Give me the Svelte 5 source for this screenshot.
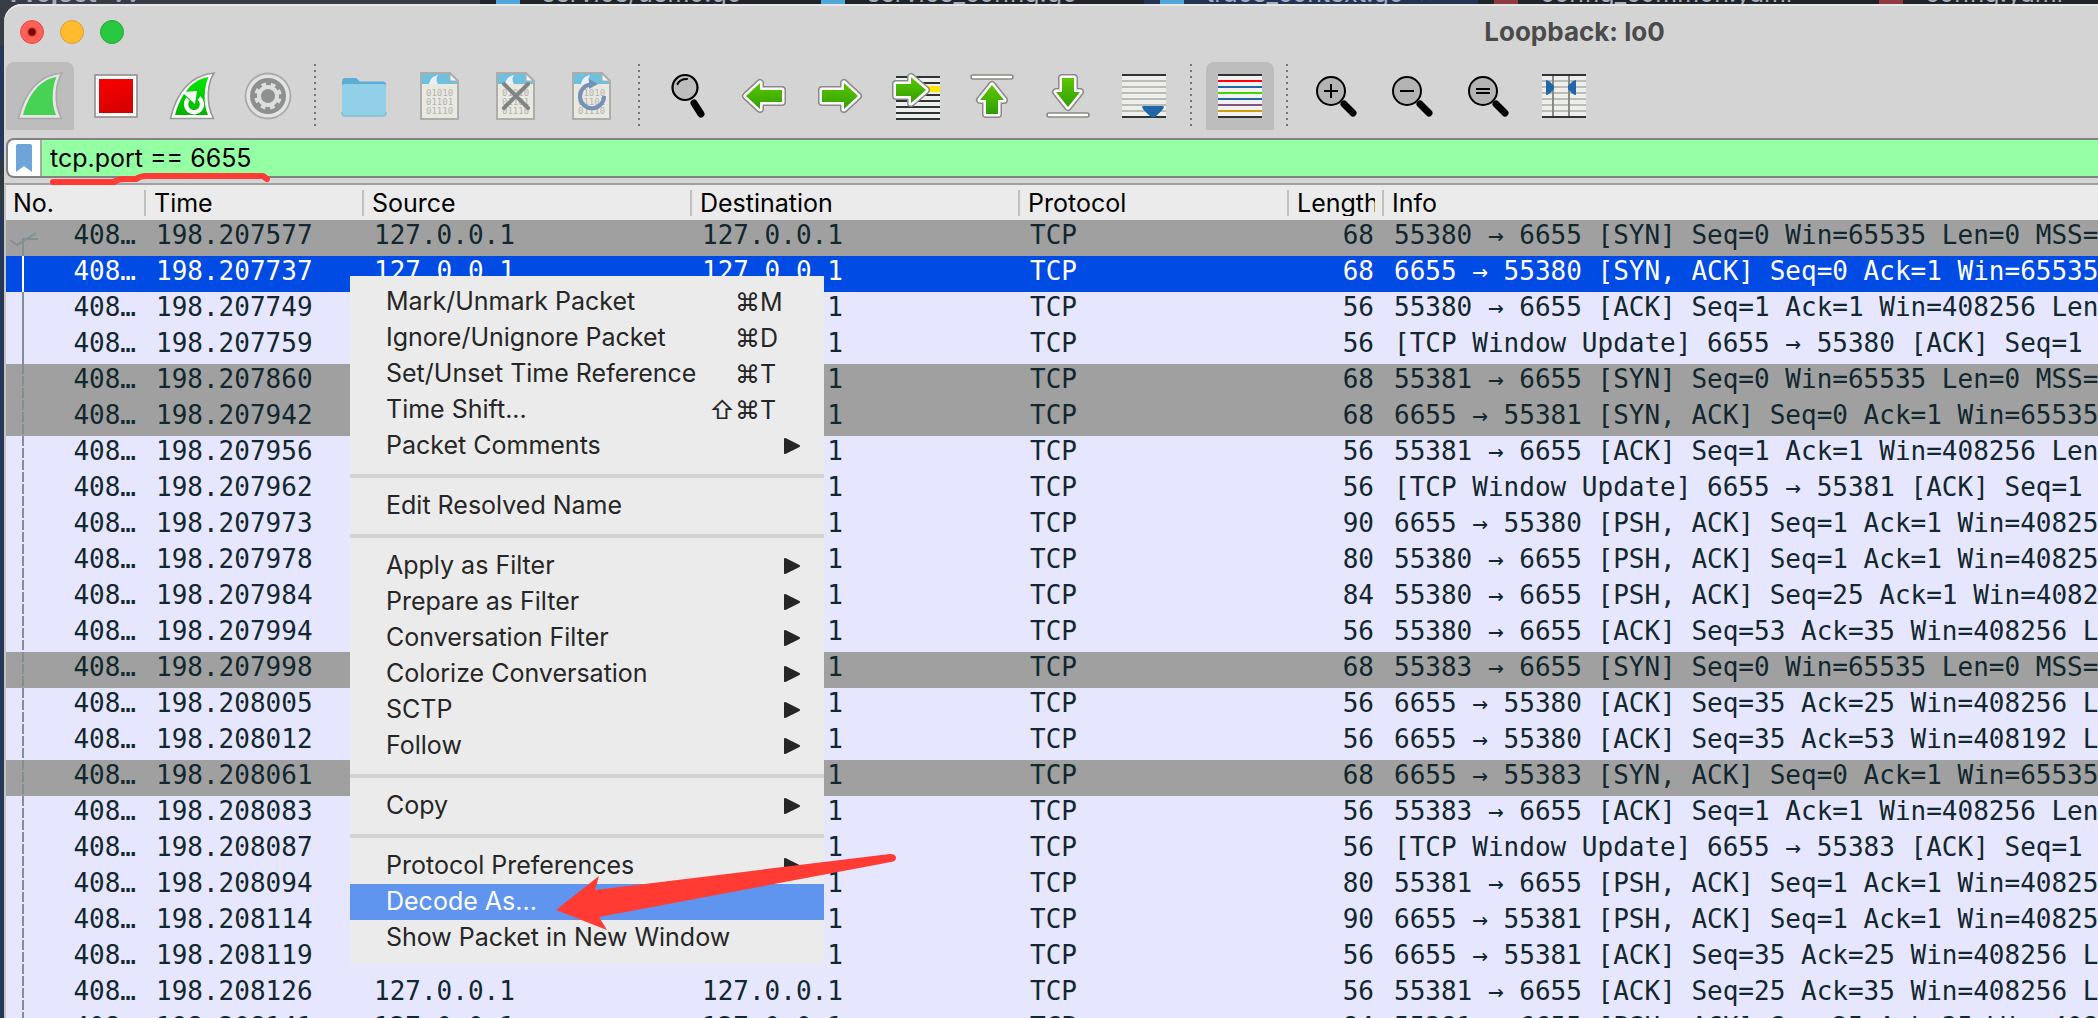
<script>
  const tabs = [
    { name: 'Project   : :', kind: 'project' },
    { name: 'service/demo.go', kind: 'go' },
    { name: 'service_config.go', kind: 'go' },
    { name: 'trace_context.go  ×', kind: 'go active' },
    { name: 'config_common.yaml', kind: 'yaml' },
    { name: 'config.yaml', kind: 'yaml' }
  ];

  const tools = [
    { id: 'start', label: 'Start capturing packets', pressed: true },
    { id: 'stop', label: 'Stop capturing packets' },
    { id: 'restart', label: 'Restart current capture' },
    { id: 'options', label: 'Capture options' },
    { id: 'sep' },
    { id: 'open', label: 'Open a capture file' },
    { id: 'save', label: 'Save this capture file' },
    { id: 'close', label: 'Close this capture file' },
    { id: 'reload', label: 'Reload this file' },
    { id: 'sep' },
    { id: 'find', label: 'Find a packet' },
    { id: 'prev', label: 'Go to previous packet' },
    { id: 'next', label: 'Go to next packet' },
    { id: 'goto', label: 'Go to specified packet' },
    { id: 'first', label: 'Go to first packet' },
    { id: 'last', label: 'Go to last packet' },
    { id: 'scroll', label: 'Auto scroll in live capture' },
    { id: 'sep' },
    { id: 'color', label: 'Colorize packet list', pressed: true },
    { id: 'sep' },
    { id: 'zoomin', label: 'Enlarge text' },
    { id: 'zoomout', label: 'Shrink text' },
    { id: 'zoomone', label: 'Normal text size' },
    { id: 'resize', label: 'Resize columns' }
  ];

  const stripes = ['#2e3436', '#ff0010', '#2066a8', '#40d800', '#2066a8', '#84528a', '#cca000', '#2e3436'];

  const columns = ['No.', 'Time', 'Source', 'Destination', 'Protocol', 'Length', 'Info'];

  const packets = [
    ['198.207577', 68, '55380 → 6655 [SYN] Seq=0 Win=65535 Len=0 MSS=16344', 'syn', 'start'],
    ['198.207737', 68, '6655 → 55380 [SYN, ACK] Seq=0 Ack=1 Win=65535 Len=0', 'selected', 'solid'],
    ['198.207749', 56, '55380 → 6655 [ACK] Seq=1 Ack=1 Win=408256 Len=0', '', 'solid'],
    ['198.207759', 56, '[TCP Window Update] 6655 → 55380 [ACK] Seq=1 Ack=1', '', 'solid'],
    ['198.207860', 68, '55381 → 6655 [SYN] Seq=0 Win=65535 Len=0 MSS=16344', 'syn'],
    ['198.207942', 68, '6655 → 55381 [SYN, ACK] Seq=0 Ack=1 Win=65535 Len=0', 'syn'],
    ['198.207956', 56, '55381 → 6655 [ACK] Seq=1 Ack=1 Win=408256 Len=0', ''],
    ['198.207962', 56, '[TCP Window Update] 6655 → 55381 [ACK] Seq=1 Ack=1', ''],
    ['198.207973', 90, '6655 → 55380 [PSH, ACK] Seq=1 Ack=1 Win=408256 Len=34', ''],
    ['198.207978', 80, '55380 → 6655 [PSH, ACK] Seq=1 Ack=1 Win=408256 Len=24', ''],
    ['198.207984', 84, '55380 → 6655 [PSH, ACK] Seq=25 Ack=1 Win=408256 Len=28', ''],
    ['198.207994', 56, '55380 → 6655 [ACK] Seq=53 Ack=35 Win=408256 Len=0', ''],
    ['198.207998', 68, '55383 → 6655 [SYN] Seq=0 Win=65535 Len=0 MSS=16344', 'syn'],
    ['198.208005', 56, '6655 → 55380 [ACK] Seq=35 Ack=25 Win=408256 Len=0', ''],
    ['198.208012', 56, '6655 → 55380 [ACK] Seq=35 Ack=53 Win=408192 Len=0', ''],
    ['198.208061', 68, '6655 → 55383 [SYN, ACK] Seq=0 Ack=1 Win=65535 Len=0', 'syn'],
    ['198.208083', 56, '55383 → 6655 [ACK] Seq=1 Ack=1 Win=408256 Len=0', ''],
    ['198.208087', 56, '[TCP Window Update] 6655 → 55383 [ACK] Seq=1 Ack=1', ''],
    ['198.208094', 80, '55381 → 6655 [PSH, ACK] Seq=1 Ack=1 Win=408256 Len=24', ''],
    ['198.208114', 90, '6655 → 55381 [PSH, ACK] Seq=1 Ack=1 Win=408256 Len=34', ''],
    ['198.208119', 56, '6655 → 55381 [ACK] Seq=35 Ack=25 Win=408256 Len=0', ''],
    ['198.208126', 56, '55381 → 6655 [ACK] Seq=25 Ack=35 Win=408256 Len=0', ''],
    ['198.208141', 84, '55381 → 6655 [PSH, ACK] Seq=25 Ack=35 Win=408256 Len=28', '']
  ].map(([time, length, info, tone, rail = 'dashed']) => ({ time, length, info, tone, rail }));

  const menu = [
    [
      { text: 'Mark/Unmark Packet', mod: '⌘', key: 'M' },
      { text: 'Ignore/Unignore Packet', mod: '⌘', key: 'D' },
      { text: 'Set/Unset Time Reference', mod: '⌘', key: 'T' },
      { text: 'Time Shift...', mod: '⇧⌘', key: 'T' },
      { text: 'Packet Comments', sub: true }
    ],
    [{ text: 'Edit Resolved Name' }],
    [
      { text: 'Apply as Filter', sub: true },
      { text: 'Prepare as Filter', sub: true },
      { text: 'Conversation Filter', sub: true },
      { text: 'Colorize Conversation', sub: true },
      { text: 'SCTP', sub: true },
      { text: 'Follow', sub: true }
    ],
    [{ text: 'Copy', sub: true }],
    [
      { text: 'Protocol Preferences', sub: true },
      { text: 'Decode As...', active: true },
      { text: 'Show Packet in New Window' }
    ]
  ];

  let filter = 'tcp.port == 6655';
</script>

{#snippet arrow(d)}
  <path {d} fill="none" stroke="#888a85" stroke-width="8" stroke-linejoin="round" />
  <path {d} fill="none" stroke="#fff" stroke-width="5" stroke-linejoin="round" />
  <path {d} fill="url(#leaf)" />
{/snippet}

{#snippet doc()}
  <path d="M5 1H34L42 9V47H5Z" fill="#e9e9e2" />
  <path d="M6 2H34V9H41V12H6Z" fill="#6fc0de" />
  <path d="M13 12C14 7 17 4 22 3C20 6 20 9 22 12Z" fill="#eeeef6" />
  <path d="M34 1V9H42Z" fill="#f2f2ee" stroke="#adadaa" stroke-width="1" />
  <path d="M5 1H34L42 9V47H5Z" fill="none" stroke="#adadaa" stroke-width="2" />
  <g class="bits">
    <text x="10" y="24">01010</text>
    <text x="10" y="33">01101</text>
    <text x="10" y="42">01110</text>
  </g>
{/snippet}

{#snippet lens()}
  <path d="M32 32L41 41" stroke="#000" stroke-width="7" stroke-linecap="round" />
  <circle cx="19" cy="19" r="14" fill="#b4b4b4" stroke="#000" stroke-width="2" />
{/snippet}

<div class="desktop">
  <div class="ide-tabs">
    {#each tabs as tab}
      <div class="ide-tab {tab.kind}">
        {#if tab.kind !== 'project'}<i></i>{/if}
        <span>{tab.name}</span>
      </div>
    {/each}
  </div>

  <main class="window">
    <header class="titlebar">
      <div class="lights">
        <button class="light close" aria-label="Close window"></button>
        <button class="light minimize" aria-label="Minimize window"></button>
        <button class="light zoom" aria-label="Zoom window"></button>
      </div>
      <h1>Loopback: lo0</h1>
    </header>

    <div class="toolbar" role="toolbar" aria-label="Main toolbar">
      {#each tools as tool}
        {#if tool.id === 'sep'}
          <span class="sep"></span>
        {:else}
          <button class="tool" class:pressed={tool.pressed} aria-label={tool.label}>
            <svg viewBox="0 0 48 48" width="48" height="48" aria-hidden="true">
              {#if tool.id === 'start'}
                <path d="M2.5 46.5C8 22 22 3 46 1C40 10 37 30 45.5 46.5Z" fill="#e6e6e6" stroke="#a9a9a9" stroke-width="1.6" />
                <path d="M7 43C12 25 22 8 40.5 5C36 15 35 32 40 43Z" fill="#47d255" />
              {:else if tool.id === 'stop'}
                <rect x="3" y="3" width="42" height="42" fill="#fff" stroke="#999" stroke-width="1.8" />
                <rect x="7" y="7" width="34" height="34" fill="url(#red)" />
              {:else if tool.id === 'restart'}
                <path d="M2.5 46.5C8 22 22 3 46 1C40 10 37 30 45.5 46.5Z" fill="#fff" stroke="#999" stroke-width="1.6" />
                <path d="M7 43C12 25 22 8 40.5 5C36 15 35 32 40 43Z" fill="url(#green)" />
                <path d="M20 27A8 8 0 1 0 31 26" fill="none" stroke="#fff" stroke-width="4.4" />
                <path d="M14 20L29 19L27 32Z" fill="#fff" />
              {:else if tool.id === 'options'}
                <circle cx="24" cy="24" r="22.5" fill="#e3e3e3" stroke="#aaa" stroke-width="1.8" />
                <circle cx="24" cy="24" r="18" fill="#8d908f" />
                <circle cx="24" cy="24" r="12" fill="none" stroke="#dededc" stroke-width="3.5" stroke-dasharray="4.7 4.72" transform="rotate(12 24 24)" />
                <circle cx="24" cy="24" r="9" fill="none" stroke="#dededc" stroke-width="4" />
              {:else if tool.id === 'open'}
                <path d="M2 10Q2 6 5 6H16L20 9.500H43Q46 9.500 46 12V40H2Z" fill="#5cadd6" />
                <path d="M2 14Q2 12 5 12H43Q46 12 46 14V41Q46 44 43 44H5Q2 44 2 41Z" fill="#92d0ea" />
                <path d="M2 40V41Q2 44 5 44H43Q46 44 46 41V40" fill="none" stroke="#83bfd9" stroke-width="1.4" />
              {:else if tool.id === 'save'}
                {@render doc()}
              {:else if tool.id === 'close'}
                {@render doc()}
                <path d="M12 12L36 36M36 12L12 36" stroke="#808483" stroke-width="4" stroke-linecap="round" />
              {:else if tool.id === 'reload'}
                {@render doc()}
                <path d="M36 24A12 12 0 1 1 22 12.500" fill="none" stroke="#7491b8" stroke-width="4" />
                <path d="M21 7L30 12L21 17Z" fill="#7491b8" />
              {:else if tool.id === 'find'}
                <path d="M30 31L37 42" stroke="#000" stroke-width="7" stroke-linecap="round" />
                <circle cx="21" cy="15.500" r="12.500" fill="#bdbdbd" stroke="#000" stroke-width="2.200" />
                <path d="M13.500 12Q16 7 23 7" fill="none" stroke="#000" stroke-width="2" stroke-linecap="round" />
              {:else if tool.id === 'prev'}
                {@render arrow('M6 24L20 11V18H42V30H20V37Z')}
              {:else if tool.id === 'next'}
                {@render arrow('M42 24L28 11V18H6V30H28V37Z')}
              {:else if tool.id === 'goto'}
                <rect x="4" y="4" width="44" height="44" fill="#eeeeec" />
                <rect x="26" y="14" width="22" height="6" fill="#ffe600" />
                {#each [4, 10, 22, 28, 34, 40, 46] as y}
                  <rect x="4" {y} width="44" height="2" fill="#2e3436" />
                {/each}
                {@render arrow('M34 18L19 5V12H4V24H19V31Z')}
              {:else if tool.id === 'first'}
                <rect x="3" y="3" width="42" height="4" rx="2" fill="#fff" stroke="#888a85" stroke-width="1.600" />
                {@render arrow('M24 13L12 28H18V42H30V28H36Z')}
              {:else if tool.id === 'last'}
                <rect x="3" y="41" width="42" height="4" rx="2" fill="#fff" stroke="#888a85" stroke-width="1.600" />
                {@render arrow('M24 35L12 20H18V6H30V20H36Z')}
              {:else if tool.id === 'scroll'}
                <rect x="2" y="2" width="44" height="44" fill="#eeeeec" />
                {#each [8, 14, 20, 26, 32, 38] as y}
                  <rect x="2" {y} width="44" height="2" fill="#babdb6" />
                {/each}
                <path d="M2 3H46M2 45H46" stroke="#2e3436" stroke-width="2" />
                <path d="M22 35Q22 34 24 34H42Q44 34 44 35Q43 38 36 44Q33 47 30 44Q23 38 22 35Z" fill="#2066aa" />
              {:else if tool.id === 'color'}
                <rect x="2" y="2" width="44" height="44" fill="#f2f2f0" />
                {#each stripes as fill, i}
                  <rect x="2" y={2 + i * 6} width="44" height="2" {fill} />
                {/each}
              {:else if tool.id === 'zoomin'}
                {@render lens()}
                <path d="M12 19H26M19 12V26" stroke="#000" stroke-width="2" />
              {:else if tool.id === 'zoomout'}
                {@render lens()}
                <path d="M12 19H26" stroke="#000" stroke-width="2" />
              {:else if tool.id === 'zoomone'}
                {@render lens()}
                <path d="M12 17H26M12 21H26" stroke="#000" stroke-width="2" />
              {:else if tool.id === 'resize'}
                <rect x="2" y="2" width="44" height="44" fill="#eeeeec" />
                {#each [8, 14, 20, 26, 32, 38] as y}
                  <rect x="2" {y} width="44" height="2" fill="#babdb6" />
                {/each}
                <path d="M2 3H46M2 45H46" stroke="#2e3436" stroke-width="2" />
                <path d="M13 4V44M29 4V44" stroke="#888a85" stroke-width="2" />
                <path d="M6 8Q9 8 14 14V17Q9 23 6 23Z" fill="#2066aa" />
                <path d="M36 8Q33 8 28 14V17Q33 23 36 23Z" fill="#2066aa" />
              {/if}
            </svg>
          </button>
        {/if}
      {/each}
    </div>

    <div class="filter">
      <button class="bookmark" aria-label="Filter bookmarks">
        <svg viewBox="0 0 16 28" width="16" height="28" aria-hidden="true">
          <path d="M0 2Q0 0 2 0H14Q16 0 16 2V28L8 22L0 28Z" fill="#6ea5d8" />
        </svg>
      </button>
      <input type="text" aria-label="Display filter" bind:value={filter} spellcheck="false" />
      <svg class="underline" viewBox="0 0 224 14" width="224" height="14" aria-hidden="true">
        <path d="M5 9H66Q70 6 76 6H88Q92 3 98 3H215L219 6" fill="none" stroke="#ff3b34" stroke-width="6" stroke-linecap="round" stroke-linejoin="round" />
      </svg>
    </div>

    <div class="list">
      <table>
        <colgroup>
          <col class="c-no" /><col class="c-time" /><col class="c-addr" /><col class="c-addr" />
          <col class="c-proto" /><col class="c-len" /><col />
        </colgroup>
        <thead>
          <tr>
            {#each columns as column}
              <th scope="col"><div>{column}</div></th>
            {/each}
          </tr>
        </thead>
        <tbody>
          {#each packets as p}
            <tr class={p.tone}>
              <td>
                <div class="num">
                  {#if p.rail === 'start'}
                    <svg class="rail" viewBox="0 0 32 36" width="32" height="36" aria-hidden="true">
                      <path d="M4 20L11 25L30 13M17 36V19H32" fill="none" stroke="#848f94" stroke-width="2" />
                    </svg>
                  {:else}
                    <span class="rail line {p.rail}"></span>
                  {/if}
                  <span>408…</span>
                </div>
              </td>
              <td>{p.time}</td>
              <td>127.0.0.1</td>
              <td>127.0.0.1</td>
              <td>TCP</td>
              <td class="len">{p.length}</td>
              <td>{p.info}</td>
            </tr>
          {/each}
        </tbody>
      </table>
    </div>
  </main>

  <div class="menu" role="menu">
    {#each menu as group}
      <div class="group" role="group">
        {#each group as item}
          <button class="item" class:active={item.active} role="menuitem">
            <span class="label">{item.text}</span>
            {#if item.key}
              <span class="mod">{item.mod}</span><span class="key">{item.key}</span>
            {/if}
            {#if item.sub}
              <svg class="sub" viewBox="0 0 18 18" width="18" height="18" aria-hidden="true">
                <path d="M2 2L16 9L2 16Z" fill="#262626" stroke="#262626" stroke-width="2" stroke-linejoin="round" />
              </svg>
            {/if}
          </button>
        {/each}
      </div>
    {/each}
  </div>

  <svg class="pointer" viewBox="0 0 346 80" width="346" height="80" aria-hidden="true">
    <path d="M1 58L44 24L40 38L335 2Q341 2 341 6Q341 9 336 10L44 65L52 78Z" fill="#ff3b34" />
  </svg>

  <svg class="defs" width="0" height="0" aria-hidden="true">
    <defs>
      <linearGradient id="leaf" x1="0" y1="0" x2="0" y2="1">
        <stop offset="0" stop-color="#5cc800" /><stop offset="1" stop-color="#2f9e00" />
      </linearGradient>
      <linearGradient id="red" x1="0" y1="0" x2="0.300" y2="1">
        <stop offset="0" stop-color="#fb0000" /><stop offset="1" stop-color="#d80000" />
      </linearGradient>
      <linearGradient id="green" x1="0" y1="0" x2="0" y2="1">
        <stop offset="0" stop-color="#00ea00" /><stop offset="1" stop-color="#00b400" />
      </linearGradient>
    </defs>
  </svg>
</div>

<style>
  :global(body) {
    margin: 0;
    overflow: hidden;
  }

  .desktop {
    --ui: Inter, "Liberation Sans", sans-serif;
    --mono: "DejaVu Sans Mono", "Liberation Mono", monospace;
    position: relative;
    display: flex;
    flex-direction: column;
    height: 100vh;
    overflow: hidden;
    background: linear-gradient(#383d44 0 46px, #27375a 46px 150px, #2e3b3c 170px 200px, #27375a 220px);
    font-family: var(--ui);
  }

  button {
    border: 0;
    padding: 0;
    background: none;
    font: inherit;
    color: inherit;
  }

  .ide-tabs {
    display: grid;
    grid-template-columns: 480fr 325fr 339fr 334fr 385fr 235fr;
    height: 4px;
    flex: none;
    overflow: hidden;
    background: #202328;
    color: #a3adbb;
    font-size: 25px;
    line-height: 22px;
    white-space: pre;
  }

  .ide-tab {
    display: flex;
    align-items: flex-end;
    gap: 22px;
    padding-left: 16px;
    height: 4px;
    overflow: hidden;
  }

  .ide-tab i {
    width: 24px;
    height: 4px;
    background: #4fa8d8;
  }

  .ide-tab.project {
    background: #373c45;
    padding-left: 10px;
    font-weight: 700;
  }

  .ide-tab.active {
    background: #233354;
  }

  .ide-tab.yaml i {
    background: #8f3a40;
  }

  .window {
    flex: 1;
    min-height: 0;
    display: flex;
    flex-direction: column;
    margin-left: 4px;
    position: relative;
    overflow: hidden;
    background: #d4d4d4;
    border-radius: 18px 0 0 0;
    box-shadow: inset 0 2px #e6e6e6;
  }

  .titlebar {
    display: grid;
    grid-template-columns: 1fr 1fr;
    align-items: center;
    height: 58px;
    flex: none;
    box-sizing: border-box;
    padding-bottom: 2px;
  }

  .lights {
    display: flex;
    gap: 16px;
    padding-left: 16px;
  }

  .light {
    width: 24px;
    height: 24px;
    border-radius: 50%;
    border: 1px solid #d9a02a;
    background: #febc2e;
  }

  .light.close {
    border-color: #de4a44;
    background: radial-gradient(circle, #760000 0 3px, #ff5f57 5px);
  }

  .light.zoom {
    border-color: #24a838;
    background: #28c840;
  }

  h1 {
    margin: 0;
    text-align: center;
    font-size: 26px;
    line-height: 30px;
    font-weight: 700;
    color: #4b4b4b;
  }

  .toolbar {
    display: flex;
    gap: 8px;
    flex: none;
    height: 68px;
    padding: 0 2px 8px;
  }

  .tool {
    display: grid;
    place-items: center;
    flex: none;
    width: 68px;
    height: 68px;
  }

  .tool.pressed {
    background: #bdbdbd;
    border-radius: 8px 8px 0 0;
  }

  .sep {
    flex: none;
    width: 2px;
    height: 62px;
    margin: 2px 6px 0 4px;
    background: repeating-linear-gradient(#777 0 2px, transparent 2px 6px);
  }

  .bits text {
    font: 9px var(--mono);
    fill: #b4b4b0;
  }

  .filter {
    display: flex;
    position: relative;
    flex: none;
    height: 36px;
    margin-left: 2px;
    border: 2px solid #828282;
    border-right: 0;
    border-radius: 8px 0 0 8px;
    background: #fff;
  }

  .bookmark {
    display: grid;
    place-items: center;
    width: 34px;
    border-right: 2px solid #a8a8a8;
    border-radius: 6px 0 0 6px;
  }

  .filter input {
    flex: 1;
    min-width: 0;
    border: 0;
    outline: 0;
    padding: 0 8px;
    background: #95ffa3;
    color: #000;
    font: 25px var(--ui);
  }

  .underline {
    position: absolute;
    left: 40px;
    top: 33px;
  }

  .list {
    flex: 1;
    min-height: 0;
    margin-top: 5px;
    border-top: 2px solid #a0a0a0;
    border-left: 2px solid #c4c4c4;
    padding-top: 1px;
    overflow: hidden;
    background: #ebebeb;
  }

  table {
    width: 100%;
    table-layout: fixed;
    border-collapse: collapse;
    background: #e6e6ff;
    color: #12272e;
    font: 26px/30px var(--mono);
  }

  .c-no { width: 139px; }
  .c-time { width: 218px; }
  .c-addr { width: 328px; }
  .c-proto { width: 269px; }
  .c-len { width: 95px; }

  th {
    height: 34px;
    padding: 0;
    background: #ebebeb;
    font: 25px/26px var(--ui);
    color: #000;
    text-align: left;
  }

  th div {
    overflow: hidden;
    height: 26px;
    margin-right: 8px;
    padding-left: 8px;
  }

  th:first-child div {
    padding-left: 7px;
  }

  th + th div {
    margin-left: -1px;
    border-left: 2px solid #c0c0c0;
  }

  td {
    height: 30px;
    padding: 0 0 6px 11px;
    overflow: hidden;
    white-space: pre;
  }

  td:first-child {
    padding: 0;
  }

  .num {
    display: flex;
    justify-content: space-between;
    height: 36px;
    padding-right: 9px;
  }

  .rail {
    flex: none;
  }

  .line {
    width: 2px;
    margin-left: 16px;
    background: #848f94;
  }

  .line.dashed {
    background: repeating-linear-gradient(#848f94 0 10px, transparent 10px 12px);
  }

  td.len {
    text-align: right;
    padding-right: 9px;
  }

  .syn {
    background: #a0a0a0;
  }

  .selected {
    background: #004be3;
    color: #fff;
  }

  .selected .line {
    background: #fff;
  }

  .menu {
    position: absolute;
    left: 350px;
    top: 276px;
    width: 474px;
    box-sizing: border-box;
    padding: 8px 0;
    background: #ebebeb;
    color: #262626;
    font-size: 25px;
    line-height: 34px;
  }

  .group + .group::before {
    content: "";
    display: block;
    height: 4px;
    margin: 10px 0;
    background: #d3d3d3;
  }

  .item {
    display: flex;
    width: 100%;
    height: 36px;
    padding: 0 23px 0 36px;
    text-align: left;
  }

  .label {
    flex: 1;
    white-space: nowrap;
  }

  .item.active {
    background: #5f95ef;
    color: #fff;
  }

  .mod,
  .key {
    line-height: 36px;
  }

  .key {
    width: 41px;
  }

  .sub {
    align-self: center;
  }

  .pointer {
    position: absolute;
    left: 555px;
    top: 852px;
  }

  .defs {
    position: absolute;
  }
</style>
